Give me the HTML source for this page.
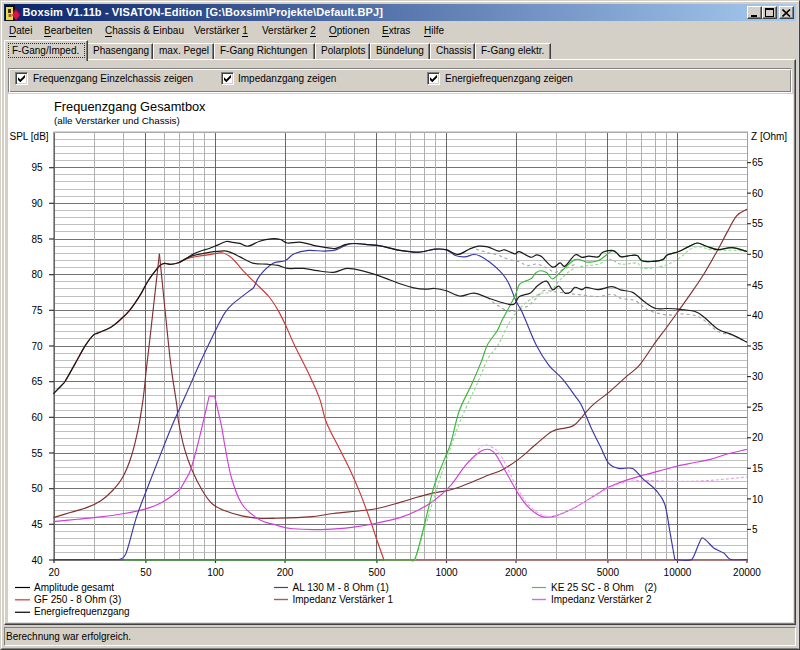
<!DOCTYPE html>
<html><head><meta charset="utf-8">
<style>
*{box-sizing:border-box}
html,body{margin:0;padding:0}
body{width:800px;height:650px;overflow:hidden;background:#d4d0c8;position:relative;font-family:"Liberation Sans",sans-serif;font-size:10px;color:#000}
.a{position:absolute}
#frame{left:0;top:0;width:800px;height:650px;border-top:1px solid #d4d0c8;border-left:1px solid #d4d0c8;border-right:1px solid #404040;border-bottom:1px solid #404040}
#frame2{left:1px;top:1px;width:798px;height:648px;border-top:1px solid #fff;border-left:1px solid #fff;border-right:1px solid #d8d8d8;border-bottom:1px solid #808080}
#title{left:4px;top:4px;width:792px;height:17px;background:linear-gradient(to right,#0a246a 0%,#a6caf0 100%)}
#ttxt{left:18.5px;top:1px;color:#fff;font-weight:bold;font-size:11px;letter-spacing:0.12px;line-height:15px;white-space:nowrap}
.tbtn{top:2px;width:15px;height:13px;background:#d4d0c8;border-top:1px solid #fff;border-left:1px solid #fff;border-right:1px solid #404040;border-bottom:1px solid #404040;box-shadow:inset -1px -1px 0 #808080}
.menu{top:25px;white-space:nowrap;line-height:12px}
.menu u{text-decoration:none;border-bottom:1px solid #000}
.tab{top:43px;height:16px;border-top:1px solid #fff;border-left:1px solid #fff;border-right:1px solid #404040;box-shadow:inset -1px 0 0 #808080;white-space:nowrap;line-height:14px;padding-left:5px}
#page{left:4px;top:59px;width:792px;height:566px;border-top:1px solid #fff;border-left:1px solid #fff;border-right:1px solid #404040;border-bottom:1px solid #404040;box-shadow:inset -1px -1px 0 #808080}
#grp{left:8px;top:68px;width:784px;height:25px;border-top:1px solid #808080;border-left:1px solid #808080;border-right:1px solid #fff;border-bottom:1px solid #fff;box-shadow:inset 1px 1px 0 #fff, inset -1px -1px 0 #808080}
.cb{top:72px;width:13px;height:13px;background:#fff;border-top:1px solid #808080;border-left:1px solid #808080;border-right:1px solid #fff;border-bottom:1px solid #fff;box-shadow:inset 1px 1px 0 #404040, inset -1px -1px 0 #d4d0c8}
.cbt{top:73px;white-space:nowrap;line-height:12px}
#white{left:8px;top:94px;width:786px;height:529px;background:#fff;box-shadow:inset -1px -1px 0 #e0e0e0}
#status{left:4px;top:627px;width:792px;height:19px;border-top:1px solid #808080;border-left:1px solid #808080;border-right:1px solid #fff;border-bottom:1px solid #fff}
svg text{font-family:"Liberation Sans",sans-serif;font-size:10px;fill:#000}
.leg{white-space:nowrap;line-height:12px}
</style></head><body>
<div id="frame" class="a"></div>
<div id="frame2" class="a"></div>
<div id="title" class="a">
  <svg class="a" style="left:1px;top:1px" width="17" height="16" viewBox="0 0 17 16">
    <rect x="0" y="0" width="10" height="16" fill="#101008"/>
    <path d="M6 8.5 L11 2.5 L17 8.5 L11 15.5 Z" fill="#5a1050" opacity="0.8"/>
    <rect x="1" y="2" width="7" height="13" fill="#e8e040"/>
    <rect x="3" y="4" width="3" height="4" fill="#403010"/>
    <rect x="3.5" y="9" width="3" height="3" fill="#a06030"/>
    <path d="M7 10 L11 5 L15 10 L11 15 Z" fill="#e0104a"/>
  </svg>
  <div id="ttxt" class="a">Boxsim V1.11b - VISATON-Edition [G:\Boxsim\Projekte\Default.BPJ]</div>
  <div class="a tbtn" style="left:743px"><div class="a" style="left:3px;top:8px;width:6px;height:2px;background:#000"></div></div>
  <div class="a tbtn" style="left:758px"><div class="a" style="left:2px;top:1px;width:9px;height:9px;border:1px solid #000;border-top-width:2px"></div></div>
  <div class="a tbtn" style="left:775px"><svg class="a" style="left:2px;top:2px" width="9" height="8" viewBox="0 0 9 8"><path d="M0.5 0.5 L8 7.5 M8 0.5 L0.5 7.5" stroke="#000" stroke-width="1.6"/></svg></div>
</div>
<div class="a menu" style="left:9px"><u>D</u>atei</div>
<div class="a menu" style="left:44px"><u>B</u>earbeiten</div>
<div class="a menu" style="left:105px"><u>C</u>hassis &amp; Einbau</div>
<div class="a menu" style="left:194px">Verstärker <u>1</u></div>
<div class="a menu" style="left:262px">Verstärker <u>2</u></div>
<div class="a menu" style="left:329px"><u>O</u>ptionen</div>
<div class="a menu" style="left:382px"><u>E</u>xtras</div>
<div class="a menu" style="left:424px"><u>H</u>ilfe</div>

<div id="page" class="a"></div>
<div class="a tab" style="left:87px;width:66px">Phasengang</div>
<div class="a tab" style="left:153px;width:61px">max. Pegel</div>
<div class="a tab" style="left:214px;width:101px">F-Gang Richtungen</div>
<div class="a tab" style="left:315px;width:55px">Polarplots</div>
<div class="a tab" style="left:370px;width:60px">Bündelung</div>
<div class="a tab" style="left:430px;width:45px">Chassis</div>
<div class="a tab" style="left:475px;width:76px">F-Gang elektr.</div>
<div class="a" style="left:4px;top:40px;width:84px;height:21px;background:#d4d0c8;border-top:1px solid #fff;border-left:1px solid #fff;border-right:1px solid #404040;box-shadow:inset -1px 0 0 #808080"></div>
<div class="a" style="left:8px;top:43px;width:77px;height:15px;border:1px dotted #303030"></div>
<div class="a" style="left:12px;top:45px;white-space:nowrap;line-height:12px">F-Gang/Imped.</div>

<div id="grp" class="a"></div>
<div class="a cb" style="left:15px"><svg class="a" style="left:1px;top:1px" width="9" height="9" viewBox="0 0 9 9"><path d="M1 3.2 L3.3 5.5 L8 0.8 L8 3.6 L3.3 8.3 L1 6 Z" fill="#000"/></svg></div>
<div class="a cbt" style="left:33px">Frequenzgang Einzelchassis zeigen</div>
<div class="a cb" style="left:221px"><svg class="a" style="left:1px;top:1px" width="9" height="9" viewBox="0 0 9 9"><path d="M1 3.2 L3.3 5.5 L8 0.8 L8 3.6 L3.3 8.3 L1 6 Z" fill="#000"/></svg></div>
<div class="a cbt" style="left:238px">Impedanzgang zeigen</div>
<div class="a cb" style="left:427px"><svg class="a" style="left:1px;top:1px" width="9" height="9" viewBox="0 0 9 9"><path d="M1 3.2 L3.3 5.5 L8 0.8 L8 3.6 L3.3 8.3 L1 6 Z" fill="#000"/></svg></div>
<div class="a cbt" style="left:445px">Energiefrequenzgang zeigen</div>

<div id="white" class="a"></div>
<svg class="a" style="left:0;top:0" width="800" height="650" viewBox="0 0 800 650">
<text x="54" y="111" style="font-size:12.8px">Frequenzgang Gesamtbox</text>
<text x="54" y="123.8" style="font-size:9.8px">(alle Verstärker und Chassis)</text>
<text x="9.5" y="140">SPL [dB]</text>
<text x="751" y="140">Z [Ohm]</text>
<line x1="54" y1="560.5" x2="747" y2="560.5" stroke="#747474" stroke-width="1"/>
<line x1="54" y1="552.5" x2="747" y2="552.5" stroke="#c0c0c0" stroke-width="1"/>
<line x1="54" y1="545.5" x2="747" y2="545.5" stroke="#c0c0c0" stroke-width="1"/>
<line x1="54" y1="538.5" x2="747" y2="538.5" stroke="#c0c0c0" stroke-width="1"/>
<line x1="54" y1="531.5" x2="747" y2="531.5" stroke="#c0c0c0" stroke-width="1"/>
<line x1="54" y1="524.5" x2="747" y2="524.5" stroke="#747474" stroke-width="1"/>
<line x1="54" y1="517.5" x2="747" y2="517.5" stroke="#c0c0c0" stroke-width="1"/>
<line x1="54" y1="510.5" x2="747" y2="510.5" stroke="#c0c0c0" stroke-width="1"/>
<line x1="54" y1="502.5" x2="747" y2="502.5" stroke="#c0c0c0" stroke-width="1"/>
<line x1="54" y1="495.5" x2="747" y2="495.5" stroke="#c0c0c0" stroke-width="1"/>
<line x1="54" y1="488.5" x2="747" y2="488.5" stroke="#747474" stroke-width="1"/>
<line x1="54" y1="481.5" x2="747" y2="481.5" stroke="#c0c0c0" stroke-width="1"/>
<line x1="54" y1="474.5" x2="747" y2="474.5" stroke="#c0c0c0" stroke-width="1"/>
<line x1="54" y1="467.5" x2="747" y2="467.5" stroke="#c0c0c0" stroke-width="1"/>
<line x1="54" y1="460.5" x2="747" y2="460.5" stroke="#c0c0c0" stroke-width="1"/>
<line x1="54" y1="453.5" x2="747" y2="453.5" stroke="#747474" stroke-width="1"/>
<line x1="54" y1="445.5" x2="747" y2="445.5" stroke="#c0c0c0" stroke-width="1"/>
<line x1="54" y1="438.5" x2="747" y2="438.5" stroke="#c0c0c0" stroke-width="1"/>
<line x1="54" y1="431.5" x2="747" y2="431.5" stroke="#c0c0c0" stroke-width="1"/>
<line x1="54" y1="424.5" x2="747" y2="424.5" stroke="#c0c0c0" stroke-width="1"/>
<line x1="54" y1="417.5" x2="747" y2="417.5" stroke="#747474" stroke-width="1"/>
<line x1="54" y1="410.5" x2="747" y2="410.5" stroke="#c0c0c0" stroke-width="1"/>
<line x1="54" y1="403.5" x2="747" y2="403.5" stroke="#c0c0c0" stroke-width="1"/>
<line x1="54" y1="395.5" x2="747" y2="395.5" stroke="#c0c0c0" stroke-width="1"/>
<line x1="54" y1="388.5" x2="747" y2="388.5" stroke="#c0c0c0" stroke-width="1"/>
<line x1="54" y1="381.5" x2="747" y2="381.5" stroke="#747474" stroke-width="1"/>
<line x1="54" y1="374.5" x2="747" y2="374.5" stroke="#c0c0c0" stroke-width="1"/>
<line x1="54" y1="367.5" x2="747" y2="367.5" stroke="#c0c0c0" stroke-width="1"/>
<line x1="54" y1="360.5" x2="747" y2="360.5" stroke="#c0c0c0" stroke-width="1"/>
<line x1="54" y1="353.5" x2="747" y2="353.5" stroke="#c0c0c0" stroke-width="1"/>
<line x1="54" y1="346.5" x2="747" y2="346.5" stroke="#747474" stroke-width="1"/>
<line x1="54" y1="338.5" x2="747" y2="338.5" stroke="#c0c0c0" stroke-width="1"/>
<line x1="54" y1="331.5" x2="747" y2="331.5" stroke="#c0c0c0" stroke-width="1"/>
<line x1="54" y1="324.5" x2="747" y2="324.5" stroke="#c0c0c0" stroke-width="1"/>
<line x1="54" y1="317.5" x2="747" y2="317.5" stroke="#c0c0c0" stroke-width="1"/>
<line x1="54" y1="310.5" x2="747" y2="310.5" stroke="#747474" stroke-width="1"/>
<line x1="54" y1="303.5" x2="747" y2="303.5" stroke="#c0c0c0" stroke-width="1"/>
<line x1="54" y1="296.5" x2="747" y2="296.5" stroke="#c0c0c0" stroke-width="1"/>
<line x1="54" y1="288.5" x2="747" y2="288.5" stroke="#c0c0c0" stroke-width="1"/>
<line x1="54" y1="281.5" x2="747" y2="281.5" stroke="#c0c0c0" stroke-width="1"/>
<line x1="54" y1="274.5" x2="747" y2="274.5" stroke="#747474" stroke-width="1"/>
<line x1="54" y1="267.5" x2="747" y2="267.5" stroke="#c0c0c0" stroke-width="1"/>
<line x1="54" y1="260.5" x2="747" y2="260.5" stroke="#c0c0c0" stroke-width="1"/>
<line x1="54" y1="253.5" x2="747" y2="253.5" stroke="#c0c0c0" stroke-width="1"/>
<line x1="54" y1="246.5" x2="747" y2="246.5" stroke="#c0c0c0" stroke-width="1"/>
<line x1="54" y1="239.5" x2="747" y2="239.5" stroke="#747474" stroke-width="1"/>
<line x1="54" y1="231.5" x2="747" y2="231.5" stroke="#c0c0c0" stroke-width="1"/>
<line x1="54" y1="224.5" x2="747" y2="224.5" stroke="#c0c0c0" stroke-width="1"/>
<line x1="54" y1="217.5" x2="747" y2="217.5" stroke="#c0c0c0" stroke-width="1"/>
<line x1="54" y1="210.5" x2="747" y2="210.5" stroke="#c0c0c0" stroke-width="1"/>
<line x1="54" y1="203.5" x2="747" y2="203.5" stroke="#747474" stroke-width="1"/>
<line x1="54" y1="196.5" x2="747" y2="196.5" stroke="#c0c0c0" stroke-width="1"/>
<line x1="54" y1="189.5" x2="747" y2="189.5" stroke="#c0c0c0" stroke-width="1"/>
<line x1="54" y1="181.5" x2="747" y2="181.5" stroke="#c0c0c0" stroke-width="1"/>
<line x1="54" y1="174.5" x2="747" y2="174.5" stroke="#c0c0c0" stroke-width="1"/>
<line x1="54" y1="167.5" x2="747" y2="167.5" stroke="#747474" stroke-width="1"/>
<line x1="54" y1="160.5" x2="747" y2="160.5" stroke="#c0c0c0" stroke-width="1"/>
<line x1="54" y1="153.5" x2="747" y2="153.5" stroke="#c0c0c0" stroke-width="1"/>
<line x1="54" y1="146.5" x2="747" y2="146.5" stroke="#c0c0c0" stroke-width="1"/>
<line x1="54" y1="139.5" x2="747" y2="139.5" stroke="#c0c0c0" stroke-width="1"/>
<line x1="54.5" y1="132" x2="54.5" y2="560" stroke="#686868" stroke-width="1"/>
<line x1="94.5" y1="132" x2="94.5" y2="560" stroke="#b0b0b0" stroke-width="1"/>
<line x1="123.5" y1="132" x2="123.5" y2="560" stroke="#b0b0b0" stroke-width="1"/>
<line x1="145.5" y1="132" x2="145.5" y2="560" stroke="#686868" stroke-width="1"/>
<line x1="164.5" y1="132" x2="164.5" y2="560" stroke="#b0b0b0" stroke-width="1"/>
<line x1="179.5" y1="132" x2="179.5" y2="560" stroke="#b0b0b0" stroke-width="1"/>
<line x1="193.5" y1="132" x2="193.5" y2="560" stroke="#b0b0b0" stroke-width="1"/>
<line x1="204.5" y1="132" x2="204.5" y2="560" stroke="#b0b0b0" stroke-width="1"/>
<line x1="215.5" y1="132" x2="215.5" y2="560" stroke="#686868" stroke-width="1"/>
<line x1="285.5" y1="132" x2="285.5" y2="560" stroke="#686868" stroke-width="1"/>
<line x1="325.5" y1="132" x2="325.5" y2="560" stroke="#b0b0b0" stroke-width="1"/>
<line x1="354.5" y1="132" x2="354.5" y2="560" stroke="#b0b0b0" stroke-width="1"/>
<line x1="376.5" y1="132" x2="376.5" y2="560" stroke="#686868" stroke-width="1"/>
<line x1="395.5" y1="132" x2="395.5" y2="560" stroke="#b0b0b0" stroke-width="1"/>
<line x1="410.5" y1="132" x2="410.5" y2="560" stroke="#b0b0b0" stroke-width="1"/>
<line x1="424.5" y1="132" x2="424.5" y2="560" stroke="#b0b0b0" stroke-width="1"/>
<line x1="435.5" y1="132" x2="435.5" y2="560" stroke="#b0b0b0" stroke-width="1"/>
<line x1="446.5" y1="132" x2="446.5" y2="560" stroke="#686868" stroke-width="1"/>
<line x1="516.5" y1="132" x2="516.5" y2="560" stroke="#686868" stroke-width="1"/>
<line x1="556.5" y1="132" x2="556.5" y2="560" stroke="#b0b0b0" stroke-width="1"/>
<line x1="585.5" y1="132" x2="585.5" y2="560" stroke="#b0b0b0" stroke-width="1"/>
<line x1="607.5" y1="132" x2="607.5" y2="560" stroke="#686868" stroke-width="1"/>
<line x1="626.5" y1="132" x2="626.5" y2="560" stroke="#b0b0b0" stroke-width="1"/>
<line x1="641.5" y1="132" x2="641.5" y2="560" stroke="#b0b0b0" stroke-width="1"/>
<line x1="655.5" y1="132" x2="655.5" y2="560" stroke="#b0b0b0" stroke-width="1"/>
<line x1="666.5" y1="132" x2="666.5" y2="560" stroke="#b0b0b0" stroke-width="1"/>
<line x1="677.5" y1="132" x2="677.5" y2="560" stroke="#686868" stroke-width="1"/>
<line x1="747.5" y1="132" x2="747.5" y2="560" stroke="#686868" stroke-width="1"/>
<line x1="53.5" y1="132" x2="53.5" y2="561" stroke="#a0a0a0" stroke-width="1"/>
<line x1="747.5" y1="132" x2="747.5" y2="561" stroke="#a0a0a0" stroke-width="1"/>
<line x1="53.5" y1="132.25" x2="748" y2="132.25" stroke="#aaaaaa" stroke-width="1.5"/>
<line x1="53.5" y1="559.5" x2="748" y2="559.5" stroke="#606060" stroke-width="1"/>
<line x1="49" y1="560.00" x2="54" y2="560.00" stroke="#333" stroke-width="1.2"/>
<line x1="49" y1="524.33" x2="54" y2="524.33" stroke="#333" stroke-width="1.2"/>
<line x1="49" y1="488.67" x2="54" y2="488.67" stroke="#333" stroke-width="1.2"/>
<line x1="49" y1="453.00" x2="54" y2="453.00" stroke="#333" stroke-width="1.2"/>
<line x1="49" y1="417.33" x2="54" y2="417.33" stroke="#333" stroke-width="1.2"/>
<line x1="49" y1="381.67" x2="54" y2="381.67" stroke="#333" stroke-width="1.2"/>
<line x1="49" y1="346.00" x2="54" y2="346.00" stroke="#333" stroke-width="1.2"/>
<line x1="49" y1="310.33" x2="54" y2="310.33" stroke="#333" stroke-width="1.2"/>
<line x1="49" y1="274.67" x2="54" y2="274.67" stroke="#333" stroke-width="1.2"/>
<line x1="49" y1="239.00" x2="54" y2="239.00" stroke="#333" stroke-width="1.2"/>
<line x1="49" y1="203.33" x2="54" y2="203.33" stroke="#333" stroke-width="1.2"/>
<line x1="49" y1="167.67" x2="54" y2="167.67" stroke="#333" stroke-width="1.2"/>
<line x1="747" y1="529.43" x2="751" y2="529.43" stroke="#333" stroke-width="1.2"/>
<line x1="747" y1="498.86" x2="751" y2="498.86" stroke="#333" stroke-width="1.2"/>
<line x1="747" y1="468.29" x2="751" y2="468.29" stroke="#333" stroke-width="1.2"/>
<line x1="747" y1="437.71" x2="751" y2="437.71" stroke="#333" stroke-width="1.2"/>
<line x1="747" y1="407.14" x2="751" y2="407.14" stroke="#333" stroke-width="1.2"/>
<line x1="747" y1="376.57" x2="751" y2="376.57" stroke="#333" stroke-width="1.2"/>
<line x1="747" y1="346.00" x2="751" y2="346.00" stroke="#333" stroke-width="1.2"/>
<line x1="747" y1="315.43" x2="751" y2="315.43" stroke="#333" stroke-width="1.2"/>
<line x1="747" y1="284.86" x2="751" y2="284.86" stroke="#333" stroke-width="1.2"/>
<line x1="747" y1="254.29" x2="751" y2="254.29" stroke="#333" stroke-width="1.2"/>
<line x1="747" y1="223.71" x2="751" y2="223.71" stroke="#333" stroke-width="1.2"/>
<line x1="747" y1="193.14" x2="751" y2="193.14" stroke="#333" stroke-width="1.2"/>
<line x1="747" y1="162.57" x2="751" y2="162.57" stroke="#333" stroke-width="1.2"/>
<line x1="54.00" y1="560" x2="54.00" y2="563" stroke="#333" stroke-width="1.2"/>
<line x1="145.92" y1="560" x2="145.92" y2="563" stroke="#333" stroke-width="1.2"/>
<line x1="215.46" y1="560" x2="215.46" y2="563" stroke="#333" stroke-width="1.2"/>
<line x1="285.00" y1="560" x2="285.00" y2="563" stroke="#333" stroke-width="1.2"/>
<line x1="376.92" y1="560" x2="376.92" y2="563" stroke="#333" stroke-width="1.2"/>
<line x1="446.46" y1="560" x2="446.46" y2="563" stroke="#333" stroke-width="1.2"/>
<line x1="516.00" y1="560" x2="516.00" y2="563" stroke="#333" stroke-width="1.2"/>
<line x1="607.92" y1="560" x2="607.92" y2="563" stroke="#333" stroke-width="1.2"/>
<line x1="677.46" y1="560" x2="677.46" y2="563" stroke="#333" stroke-width="1.2"/>
<line x1="747.00" y1="560" x2="747.00" y2="563" stroke="#333" stroke-width="1.2"/>
<path d="M53.40,517.60 C56.22,516.75 64.67,514.20 70.30,512.50 C75.93,510.80 82.12,509.37 87.20,507.40 C92.28,505.43 96.57,503.52 100.80,500.70 C105.03,497.88 108.93,494.45 112.60,490.50 C116.27,486.55 119.70,482.63 122.80,477.00 C125.90,471.37 128.67,464.60 131.20,456.70 C133.73,448.80 136.02,439.20 138.00,429.60 C139.98,420.00 141.70,409.25 143.10,399.10 C144.50,388.95 145.38,377.72 146.40,368.70 C147.42,359.68 148.73,348.95 149.20,345.00" fill="none" stroke="#803030" stroke-width="1.15" stroke-linejoin="round" />
<path d="M149.20,345.00 L159.40,253.80" fill="none" stroke="#803030" stroke-width="1.15" stroke-linejoin="round" />
<path d="M159.40,253.80 C160.93,269.00 166.53,325.28 168.60,345.00 C170.67,364.72 170.42,361.95 171.80,372.10 C173.18,382.25 175.78,397.67 176.90,405.90 C178.02,414.13 177.22,414.28 178.50,421.50 C179.78,428.72 182.33,441.08 184.60,449.20 C186.87,457.32 189.15,463.32 192.10,470.20 C195.05,477.08 198.92,484.87 202.30,490.50 C205.68,496.13 208.62,500.62 212.40,504.00 C216.18,507.38 220.08,508.82 225.00,510.80 C229.92,512.78 236.27,514.65 241.90,515.90 C247.53,517.15 253.15,517.90 258.80,518.30 C264.45,518.70 267.33,518.53 275.80,518.30 C284.27,518.07 300.02,517.70 309.60,516.90 C319.18,516.10 324.83,514.52 333.30,513.50 C341.77,512.48 353.07,511.63 360.40,510.80 C367.73,509.97 370.70,509.90 377.30,508.50 C383.90,507.10 393.40,504.27 400.00,502.40 C406.60,500.53 411.27,498.88 416.90,497.30 C422.53,495.72 428.15,494.15 433.80,492.90 C439.45,491.65 445.15,491.33 450.80,489.80 C456.45,488.27 461.50,486.12 467.70,483.70 C473.90,481.28 482.37,477.55 488.00,475.30 C493.63,473.05 496.43,472.85 501.50,470.20 C506.57,467.55 512.75,463.63 518.40,459.40 C524.05,455.17 529.75,449.48 535.40,444.80 C541.05,440.12 547.23,434.12 552.30,431.30 C557.37,428.48 562.02,429.03 565.80,427.90 C569.58,426.77 570.65,428.17 575.00,424.50 C579.35,420.83 586.27,411.25 591.90,405.90 C597.53,400.55 603.15,397.20 608.80,392.40 C614.45,387.60 620.72,381.62 625.80,377.10 C630.88,372.58 634.68,370.65 639.30,365.30 C643.92,359.95 648.83,351.47 653.50,345.00 C658.17,338.53 663.08,332.27 667.30,326.50 C671.52,320.73 674.95,315.78 678.80,310.40 C682.65,305.02 686.17,300.35 690.40,294.20 C694.63,288.05 699.58,281.00 704.20,273.50 C708.82,266.00 714.25,256.13 718.10,249.20 C721.95,242.27 724.22,237.47 727.30,231.90 C730.38,226.33 733.32,219.57 736.60,215.80 C739.88,212.03 745.27,210.38 747.00,209.30" fill="none" stroke="#803030" stroke-width="1.15" stroke-linejoin="round" />
<path d="M53.40,393.80 C54.88,392.27 60.30,386.77 62.30,384.60 C64.30,382.43 63.35,384.13 65.40,380.80 C67.45,377.47 71.27,370.50 74.60,364.60 C77.93,358.70 82.32,350.27 85.40,345.40 C88.48,340.53 91.05,337.45 93.10,335.40 C95.15,333.35 95.13,334.25 97.70,333.10 C100.27,331.95 105.68,329.92 108.50,328.50 C111.32,327.08 112.68,326.02 114.60,324.60 C116.52,323.18 117.50,322.37 120.00,320.00 C122.50,317.63 126.27,314.50 129.60,310.40 C132.93,306.30 136.98,300.22 140.00,295.40 C143.02,290.58 145.13,285.60 147.70,281.50 C150.27,277.40 153.35,273.48 155.40,270.80 C157.45,268.12 158.47,266.63 160.00,265.40 C161.53,264.17 162.80,263.58 164.60,263.40 C166.40,263.22 168.48,264.40 170.80,264.30 C173.12,264.20 175.93,263.68 178.50,262.80 C181.07,261.92 183.65,259.97 186.20,259.00 C188.75,258.03 189.97,257.73 193.80,257.00 C197.63,256.27 204.33,255.27 209.20,254.60 C214.07,253.93 219.15,252.35 223.00,253.00 C226.85,253.65 228.88,255.47 232.30,258.50 C235.72,261.53 239.72,267.17 243.50,271.20 C247.28,275.23 250.78,278.48 255.00,282.70 C259.22,286.92 264.95,291.88 268.80,296.50 C272.65,301.12 275.20,305.40 278.10,310.40 C281.00,315.40 283.48,320.73 286.20,326.50 C288.92,332.27 290.50,336.83 294.40,345.00 C298.30,353.17 305.37,366.48 309.60,375.50 C313.83,384.52 316.98,391.22 319.80,399.10 C322.62,406.98 323.12,414.33 326.50,422.80 C329.88,431.27 336.15,442.00 340.10,449.90 C344.05,457.80 346.82,462.87 350.20,470.20 C353.58,477.53 357.02,485.43 360.40,493.90 C363.78,502.37 367.68,513.10 370.50,521.00 C373.32,528.90 375.05,534.80 377.30,541.30 C379.55,547.80 382.88,556.88 384.00,560.00" fill="none" stroke="#d03434" stroke-width="1.15" stroke-linejoin="round" />
<path d="M384.00,560.00 L747.00,560.00" fill="none" stroke="#e08080" stroke-width="1.2" stroke-linejoin="round" />
<path d="M53.40,521.60 C57.35,521.22 69.20,520.08 77.10,519.30 C85.00,518.52 92.92,517.87 100.80,516.90 C108.68,515.93 117.07,514.80 124.40,513.50 C131.73,512.20 138.58,510.95 144.80,509.10 C151.02,507.25 156.07,505.50 161.70,502.40 C167.33,499.30 174.65,494.23 178.60,490.50 C182.55,486.77 183.37,483.55 185.40,480.00 C187.43,476.45 188.62,475.62 190.80,469.20 C192.98,462.78 195.43,453.67 198.50,441.50 C201.57,429.33 207.42,403.75 209.20,396.20" fill="none" stroke="#d040d8" stroke-width="1.15" stroke-linejoin="round" />
<path d="M209.20,396.20 L214.60,396.20" fill="none" stroke="#d040d8" stroke-width="1.15" stroke-linejoin="round" />
<path d="M214.60,396.20 C215.75,401.20 219.77,417.82 221.50,426.20 C223.23,434.58 223.33,437.87 225.00,446.50 C226.67,455.13 228.68,468.42 231.50,478.00 C234.32,487.58 237.35,497.12 241.90,504.00 C246.45,510.88 253.15,515.80 258.80,519.30 C264.45,522.80 270.15,523.42 275.80,525.00 C281.45,526.58 284.25,528.07 292.70,528.80 C301.15,529.53 316.35,529.68 326.50,529.40 C336.65,529.12 345.70,528.05 353.60,527.10 C361.50,526.15 366.17,525.28 373.90,523.70 C381.63,522.12 392.83,519.75 400.00,517.60 C407.17,515.45 411.27,513.62 416.90,510.80 C422.53,507.98 428.15,504.93 433.80,500.70 C439.45,496.47 445.72,491.05 450.80,485.40 C455.88,479.75 459.80,472.15 464.30,466.80 C468.80,461.45 473.97,456.23 477.80,453.30 C481.63,450.37 484.47,449.20 487.30,449.20 C490.13,449.20 491.87,449.80 494.80,453.30 C497.73,456.80 500.97,463.43 504.90,470.20 C508.83,476.97 514.45,487.70 518.40,493.90 C522.35,500.10 524.65,503.62 528.60,507.40 C532.55,511.18 537.58,515.18 542.10,516.60 C546.62,518.02 550.22,517.43 555.70,515.90 C561.18,514.37 568.97,510.50 575.00,507.40 C581.03,504.30 586.27,500.68 591.90,497.30 C597.53,493.92 603.15,489.92 608.80,487.10 C614.45,484.28 620.15,482.37 625.80,480.40 C631.45,478.43 637.07,476.88 642.70,475.30 C648.33,473.72 653.97,472.42 659.60,470.90 C665.23,469.38 670.87,467.55 676.50,466.20 C682.13,464.85 687.75,463.93 693.40,462.80 C699.05,461.67 704.75,460.87 710.40,459.40 C716.05,457.93 721.67,455.58 727.30,454.00 C732.93,452.42 740.92,450.65 744.20,449.90 C747.48,449.15 746.53,449.57 747.00,449.50" fill="none" stroke="#d040d8" stroke-width="1.15" stroke-linejoin="round" />
<path d="M477.80,450.00 C478.93,449.13 481.77,444.97 484.60,444.80 C487.43,444.63 491.98,447.02 494.80,449.00 C497.62,450.98 497.57,449.87 501.50,456.70 C505.43,463.53 513.88,481.95 518.40,490.00 C522.92,498.05 524.65,500.83 528.60,505.00 C532.55,509.17 537.58,513.18 542.10,515.00 C546.62,516.82 550.22,517.17 555.70,515.90 C561.18,514.63 568.97,510.50 575.00,507.40 C581.03,504.30 586.27,500.53 591.90,497.30 C597.53,494.07 603.15,490.55 608.80,488.00 C614.45,485.45 620.15,483.27 625.80,482.00 C631.45,480.73 634.25,480.50 642.70,480.40 C651.15,480.30 665.22,481.40 676.50,481.40 C687.78,481.40 698.65,481.13 710.40,480.40 C722.15,479.67 740.90,477.57 747.00,477.00" fill="none" stroke="#e8a0e8" stroke-width="1.1" stroke-linejoin="round" stroke-dasharray="3,2"/>
<path d="M415.20,560.00 C417.17,553.50 423.33,533.15 427.00,521.00 C430.67,508.85 433.80,497.82 437.20,487.10 C440.60,476.38 443.45,467.97 447.40,456.70 C451.35,445.43 455.83,431.92 460.90,419.50 C465.97,407.08 473.28,392.37 477.80,382.20 C482.32,372.03 484.62,364.70 488.00,358.50 C491.38,352.30 494.68,350.72 498.10,345.00 C501.52,339.28 504.85,330.37 508.50,324.20 C512.15,318.03 515.00,313.00 520.00,308.00 C525.00,303.00 533.50,296.87 538.50,294.20 C543.50,291.53 546.42,294.37 550.00,292.00 C553.58,289.63 555.83,284.00 560.00,280.00 C564.17,276.00 568.67,270.63 575.00,268.00 C581.33,265.37 592.23,265.67 598.00,264.20 C603.77,262.73 605.73,259.20 609.60,259.20 C613.47,259.20 616.58,263.57 621.20,264.20 C625.82,264.83 633.85,262.30 637.30,263.00 C640.75,263.70 637.67,267.88 641.90,268.40 C646.13,268.92 656.55,267.75 662.70,266.10 C668.85,264.45 673.42,261.68 678.80,258.50 C684.18,255.32 689.22,248.42 695.00,247.00 C700.78,245.58 706.57,249.43 713.50,250.00 C720.43,250.57 731.02,250.07 736.60,250.40 C742.18,250.73 745.27,251.73 747.00,252.00" fill="none" stroke="#90d890" stroke-width="1.1" stroke-linejoin="round" stroke-dasharray="3,2"/>
<path d="M476.00,249.00 C477.95,249.62 483.95,251.63 487.70,252.70 C491.45,253.77 494.87,254.23 498.50,255.40 C502.13,256.57 505.82,258.57 509.50,259.70 C513.18,260.83 517.72,261.18 520.60,262.20 C523.48,263.22 524.13,265.50 526.80,265.80 C529.47,266.10 533.32,263.68 536.60,264.00 C539.88,264.32 543.63,266.37 546.50,267.70 C549.37,269.03 551.55,271.48 553.80,272.00 C556.05,272.52 556.47,272.10 560.00,270.80 C563.53,269.50 572.50,265.30 575.00,264.20" fill="none" stroke="#a0a0a0" stroke-width="1.1" stroke-linejoin="round" stroke-dasharray="3,3"/>
<path d="M487.70,297.70 C489.28,298.95 493.35,302.92 497.20,305.20 C501.05,307.48 505.87,311.18 510.80,311.40 C515.73,311.62 522.70,308.55 526.80,306.50 C530.90,304.45 532.53,301.77 535.40,299.10 C538.27,296.43 540.93,291.73 544.00,290.50 C547.07,289.27 548.63,291.08 553.80,291.70 C558.97,292.32 567.63,293.40 575.00,294.20 C582.37,295.00 591.83,296.50 598.00,296.50 C604.17,296.50 608.17,293.88 612.00,294.20 C615.83,294.52 617.17,297.32 621.00,298.40 C624.83,299.48 630.37,298.70 635.00,300.70 C639.63,302.70 643.42,308.02 648.80,310.40 C654.18,312.78 661.90,314.42 667.30,315.00 C672.70,315.58 675.82,313.52 681.20,313.90 C686.58,314.28 693.45,314.35 699.60,317.30 C705.75,320.25 712.72,328.65 718.10,331.60 C723.48,334.55 727.08,333.23 731.90,335.00 C736.72,336.77 744.48,341.00 747.00,342.20" fill="none" stroke="#a0a0a0" stroke-width="1.1" stroke-linejoin="round" stroke-dasharray="3,3"/>
<path d="M53.40,559.50 L119.40,559.50" fill="none" stroke="#3838a8" stroke-width="1.15" stroke-linejoin="round" />
<path d="M119.40,559.50 C120.52,558.43 123.28,560.08 126.10,553.10 C128.92,546.12 132.92,528.03 136.30,517.60 C139.68,507.17 142.73,500.08 146.40,490.50 C150.07,480.92 154.07,470.82 158.30,460.10 C162.53,449.38 167.28,436.92 171.80,426.20 C176.32,415.48 180.88,405.95 185.40,395.80 C189.92,385.65 194.67,374.60 198.90,365.30 C203.13,356.00 207.28,347.30 210.80,340.00 C214.32,332.70 217.63,326.05 220.00,321.50 C222.37,316.95 223.02,315.52 225.00,312.70 C226.98,309.88 228.05,308.07 231.90,304.60 C235.75,301.13 244.45,294.78 248.10,291.90 C251.75,289.02 251.88,289.98 253.80,287.30 C255.72,284.62 256.32,279.83 259.60,275.80 C262.88,271.77 269.27,265.60 273.50,263.10 C277.73,260.60 281.55,262.35 285.00,260.80 C288.45,259.25 290.35,255.53 294.20,253.80 C298.05,252.07 303.10,250.85 308.10,250.40 C313.10,249.95 319.58,251.18 324.20,251.10 C328.82,251.02 331.95,250.98 335.80,249.90 C339.65,248.82 344.23,245.67 347.30,244.60 C350.37,243.53 350.73,243.50 354.20,243.50 C357.67,243.50 363.48,244.15 368.10,244.60 C372.72,245.05 376.58,245.23 381.90,246.20 C387.22,247.17 393.90,249.40 400.00,250.40 C406.10,251.40 412.73,252.40 418.50,252.20 C424.27,252.00 429.98,249.58 434.60,249.20 C439.22,248.82 442.73,248.85 446.20,249.90 C449.67,250.95 452.33,254.33 455.40,255.50 C458.47,256.67 461.53,257.07 464.60,256.90 C467.67,256.73 471.23,254.65 473.80,254.50 C476.37,254.35 477.33,254.72 480.00,256.00 C482.67,257.28 486.52,259.73 489.80,262.20 C493.08,264.67 497.03,268.13 499.70,270.80 C502.37,273.47 503.95,275.33 505.80,278.20 C507.65,281.07 509.15,284.32 510.80,288.00 C512.45,291.68 513.87,296.40 515.70,300.30 C517.53,304.20 520.17,308.12 521.80,311.40 C523.43,314.68 523.10,314.40 525.50,320.00 C527.90,325.60 532.30,337.45 536.20,345.00 C540.10,352.55 544.53,359.67 548.90,365.30 C553.27,370.93 558.05,373.72 562.40,378.80 C566.75,383.88 571.77,391.28 575.00,395.80 C578.23,400.32 578.98,400.27 581.80,405.90 C584.62,411.53 588.80,422.83 591.90,429.60 C595.00,436.37 597.58,440.87 600.40,446.50 C603.22,452.13 605.70,459.73 608.80,463.40 C611.90,467.07 615.05,467.65 619.00,468.50 C622.95,469.35 628.55,466.80 632.50,468.50 C636.45,470.20 638.75,475.03 642.70,478.70 C646.65,482.37 652.53,486.28 656.20,490.50 C659.87,494.72 662.43,497.23 664.70,504.00 C666.97,510.77 668.95,526.58 669.80,531.10" fill="none" stroke="#3838a8" stroke-width="1.15" stroke-linejoin="round" />
<path d="M669.80,531.10 L674.80,559.50" fill="none" stroke="#3838a8" stroke-width="1.15" stroke-linejoin="round" />
<path d="M674.80,559.50 C676.50,559.50 689.09,561.66 691.80,559.50 C694.51,557.34 699.71,539.05 701.90,537.90 C704.09,536.75 711.50,546.48 713.70,548.00 C715.90,549.52 722.20,551.95 723.90,553.10 C725.60,554.25 728.39,558.86 730.70,559.50 C733.01,560.14 745.37,559.50 747.00,559.50" fill="none" stroke="#3838a8" stroke-width="1.15" stroke-linejoin="round" />
<path d="M124.00,560.00 L410.20,560.00" fill="none" stroke="#38b838" stroke-width="1.15" stroke-linejoin="round" />
<path d="M410.20,560.00 C411.03,559.70 412.95,563.58 415.20,558.20 C417.45,552.82 420.60,539.55 423.70,527.70 C426.80,515.85 430.42,498.37 433.80,487.10 C437.18,475.83 441.17,467.43 444.00,460.10 C446.83,452.77 448.27,451.28 450.80,443.10 C453.33,434.92 455.82,420.58 459.20,411.00 C462.58,401.42 467.43,393.78 471.10,385.60 C474.77,377.42 478.50,368.67 481.20,361.90 C483.90,355.13 484.68,350.12 487.30,345.00 C489.92,339.88 494.42,335.37 496.90,331.20 C499.38,327.03 500.10,324.12 502.20,320.00 C504.30,315.88 507.25,310.80 509.50,306.50 C511.75,302.20 514.05,297.90 515.70,294.20 C517.35,290.50 517.55,286.57 519.40,284.30 C521.25,282.03 524.75,281.62 526.80,280.60 C528.85,279.58 530.27,279.43 531.70,278.20 C533.13,276.97 533.97,274.43 535.40,273.20 C536.83,271.97 538.45,270.90 540.30,270.80 C542.15,270.70 544.45,271.27 546.50,272.60 C548.55,273.93 550.35,278.80 552.60,278.80 C554.85,278.80 556.27,275.80 560.00,272.60 C563.73,269.40 570.58,261.37 575.00,259.60 C579.42,257.83 582.67,261.80 586.50,262.00 C590.33,262.20 593.77,262.63 598.00,260.80 C602.23,258.97 608.82,252.35 611.90,251.00 C614.98,249.65 614.95,251.72 616.50,252.70 C618.05,253.68 618.88,256.43 621.20,256.90 C623.52,257.37 627.72,255.73 630.40,255.50 C633.08,255.27 635.38,254.62 637.30,255.50 C639.22,256.38 639.58,259.80 641.90,260.80 C644.22,261.80 647.73,261.70 651.20,261.50 C654.67,261.30 660.02,260.68 662.70,259.60 C665.38,258.52 664.62,256.35 667.30,255.00 C669.98,253.65 675.33,252.85 678.80,251.50 C682.27,250.15 685.02,248.32 688.10,246.90 C691.18,245.48 694.23,243.12 697.30,243.00 C700.37,242.88 703.03,245.08 706.50,246.20 C709.97,247.32 713.87,249.47 718.10,249.70 C722.33,249.93 727.08,247.30 731.90,247.60 C736.72,247.90 744.48,250.85 747.00,251.50" fill="none" stroke="#38b838" stroke-width="1.15" stroke-linejoin="round" />
<path d="M178.50,262.80 C179.78,262.08 183.65,259.73 186.20,258.50 C188.75,257.27 189.97,256.43 193.80,255.40 C197.63,254.37 204.07,253.07 209.20,252.30 C214.33,251.53 220.75,250.67 224.60,250.80 C228.45,250.93 229.73,252.08 232.30,253.10 C234.87,254.12 236.60,255.23 240.00,256.90 C243.40,258.57 248.28,261.88 252.70,263.10 C257.12,264.32 262.27,263.82 266.50,264.20 C270.73,264.58 274.63,264.70 278.10,265.40 C281.57,266.10 283.07,267.90 287.30,268.40 C291.53,268.90 298.50,268.02 303.50,268.40 C308.50,268.78 312.30,270.05 317.30,270.70 C322.30,271.35 328.50,272.68 333.50,272.30 C338.50,271.92 342.30,268.58 347.30,268.40 C352.30,268.22 357.73,269.78 363.50,271.20 C369.27,272.62 375.82,274.80 381.90,276.90 C387.98,279.00 394.68,281.98 400.00,283.80 C405.32,285.62 409.57,286.90 413.80,287.80 C418.03,288.70 421.93,289.08 425.40,289.20 C428.87,289.32 431.13,288.23 434.60,288.50 C438.07,288.77 441.97,289.53 446.20,290.80 C450.43,292.07 455.40,295.72 460.00,296.10 C464.60,296.48 469.18,292.83 473.80,293.10 C478.42,293.37 483.58,296.30 487.70,297.70 C491.82,299.10 494.25,300.35 498.50,301.50 C502.75,302.65 509.72,305.42 513.20,304.60 C516.68,303.78 516.52,298.55 519.40,296.60 C522.28,294.65 527.43,294.75 530.50,292.90 C533.57,291.05 535.13,287.45 537.80,285.50 C540.47,283.55 544.03,280.48 546.50,281.20 C548.97,281.92 550.55,288.97 552.60,289.80 C554.65,290.63 556.73,285.65 558.80,286.20 C560.87,286.75 563.00,292.15 565.00,293.10 C567.00,294.05 569.13,292.87 570.80,291.90 C572.47,290.93 573.15,287.68 575.00,287.30 C576.85,286.92 579.98,289.60 581.90,289.60 C583.82,289.60 583.80,287.30 586.50,287.30 C589.20,287.30 593.87,289.72 598.10,289.60 C602.33,289.48 608.05,286.52 611.90,286.60 C615.75,286.68 617.73,289.13 621.20,290.10 C624.67,291.07 628.87,290.48 632.70,292.40 C636.53,294.32 640.35,298.92 644.20,301.60 C648.05,304.28 651.95,307.35 655.80,308.50 C659.65,309.65 663.47,308.38 667.30,308.50 C671.13,308.62 674.18,308.70 678.80,309.20 C683.42,309.70 690.77,310.15 695.00,311.50 C699.23,312.85 700.35,314.33 704.20,317.30 C708.05,320.27 713.48,326.42 718.10,329.30 C722.72,332.18 727.08,332.45 731.90,334.60 C736.72,336.75 744.48,340.93 747.00,342.20" fill="none" stroke="#202020" stroke-width="1.2" stroke-linejoin="round" />
<path d="M53.40,393.80 C54.88,392.27 60.30,386.77 62.30,384.60 C64.30,382.43 63.35,384.13 65.40,380.80 C67.45,377.47 71.27,370.50 74.60,364.60 C77.93,358.70 82.32,350.27 85.40,345.40 C88.48,340.53 91.05,337.45 93.10,335.40 C95.15,333.35 95.13,334.25 97.70,333.10 C100.27,331.95 105.68,329.92 108.50,328.50 C111.32,327.08 112.68,326.02 114.60,324.60 C116.52,323.18 117.50,322.37 120.00,320.00 C122.50,317.63 126.27,314.50 129.60,310.40 C132.93,306.30 136.98,300.22 140.00,295.40 C143.02,290.58 145.13,285.60 147.70,281.50 C150.27,277.40 153.35,273.48 155.40,270.80 C157.45,268.12 158.47,266.63 160.00,265.40 C161.53,264.17 162.80,263.58 164.60,263.40 C166.40,263.22 168.48,264.40 170.80,264.30 C173.12,264.20 175.93,263.77 178.50,262.80 C181.07,261.83 183.65,260.00 186.20,258.50 C188.75,257.00 191.25,255.08 193.80,253.80 C196.35,252.52 198.93,251.68 201.50,250.80 C204.07,249.92 206.63,249.40 209.20,248.50 C211.77,247.60 214.07,246.57 216.90,245.40 C219.73,244.23 223.63,242.02 226.20,241.50 C228.77,240.98 230.00,241.98 232.30,242.30 C234.60,242.62 237.37,242.75 240.00,243.40 C242.63,244.05 244.83,246.57 248.10,246.20 C251.37,245.83 255.75,242.43 259.60,241.20 C263.45,239.97 267.73,239.08 271.20,238.80 C274.67,238.52 277.72,238.80 280.40,239.50 C283.08,240.20 283.83,242.53 287.30,243.00 C290.77,243.47 296.20,241.77 301.20,242.30 C306.20,242.83 311.92,245.17 317.30,246.20 C322.68,247.23 330.03,248.27 333.50,248.50 C336.97,248.73 336.18,248.25 338.10,247.60 C340.02,246.95 342.32,245.28 345.00,244.60 C347.68,243.92 350.35,243.50 354.20,243.50 C358.05,243.50 363.48,244.15 368.10,244.60 C372.72,245.05 376.58,245.23 381.90,246.20 C387.22,247.17 393.90,249.40 400.00,250.40 C406.10,251.40 412.73,252.40 418.50,252.20 C424.27,252.00 429.98,249.62 434.60,249.20 C439.22,248.78 442.35,248.82 446.20,249.70 C450.05,250.58 453.87,254.58 457.70,254.50 C461.53,254.42 465.73,250.58 469.20,249.20 C472.67,247.82 475.42,246.58 478.50,246.20 C481.58,245.82 484.37,246.08 487.70,246.90 C491.03,247.72 495.68,250.62 498.50,251.10 C501.32,251.58 501.93,249.35 504.60,249.80 C507.27,250.25 512.03,253.48 514.50,253.80 C516.97,254.12 516.73,251.13 519.40,251.70 C522.07,252.27 527.63,256.68 530.50,257.20 C533.37,257.72 534.77,254.90 536.60,254.80 C538.43,254.70 538.83,254.55 541.50,256.60 C544.17,258.65 549.52,266.07 552.60,267.10 C555.68,268.13 557.93,262.97 560.00,262.80 C562.07,262.63 562.50,267.40 565.00,266.10 C567.50,264.80 572.18,256.47 575.00,255.00 C577.82,253.53 579.60,257.10 581.90,257.30 C584.20,257.50 586.10,256.27 588.80,256.20 C591.50,256.13 595.78,257.57 598.10,256.90 C600.42,256.23 600.40,253.28 602.70,252.20 C605.00,251.12 609.60,250.32 611.90,250.40 C614.20,250.48 614.95,251.62 616.50,252.70 C618.05,253.78 618.88,256.43 621.20,256.90 C623.52,257.37 627.72,255.73 630.40,255.50 C633.08,255.27 635.38,254.62 637.30,255.50 C639.22,256.38 639.58,259.80 641.90,260.80 C644.22,261.80 647.73,261.70 651.20,261.50 C654.67,261.30 660.02,260.68 662.70,259.60 C665.38,258.52 664.62,256.35 667.30,255.00 C669.98,253.65 675.33,252.85 678.80,251.50 C682.27,250.15 685.02,248.32 688.10,246.90 C691.18,245.48 694.23,243.12 697.30,243.00 C700.37,242.88 703.03,245.08 706.50,246.20 C709.97,247.32 713.87,249.47 718.10,249.70 C722.33,249.93 727.08,247.30 731.90,247.60 C736.72,247.90 744.48,250.85 747.00,251.50" fill="none" stroke="#181818" stroke-width="1.2" stroke-linejoin="round" />
<text x="42.5" y="563.6" text-anchor="end">40</text>
<text x="42.5" y="527.9" text-anchor="end">45</text>
<text x="42.5" y="492.3" text-anchor="end">50</text>
<text x="42.5" y="456.6" text-anchor="end">55</text>
<text x="42.5" y="420.9" text-anchor="end">60</text>
<text x="42.5" y="385.3" text-anchor="end">65</text>
<text x="42.5" y="349.6" text-anchor="end">70</text>
<text x="42.5" y="313.9" text-anchor="end">75</text>
<text x="42.5" y="278.3" text-anchor="end">80</text>
<text x="42.5" y="242.6" text-anchor="end">85</text>
<text x="42.5" y="206.9" text-anchor="end">90</text>
<text x="42.5" y="171.3" text-anchor="end">95</text>
<text x="752" y="533.0">5</text>
<text x="752" y="502.5">10</text>
<text x="752" y="471.9">15</text>
<text x="752" y="441.3">20</text>
<text x="752" y="410.7">25</text>
<text x="752" y="380.2">30</text>
<text x="752" y="349.6">35</text>
<text x="752" y="319.0">40</text>
<text x="752" y="288.5">45</text>
<text x="752" y="257.9">50</text>
<text x="752" y="227.3">55</text>
<text x="752" y="196.7">60</text>
<text x="752" y="166.2">65</text>
<text x="54.0" y="575.5" text-anchor="middle">20</text>
<text x="145.9" y="575.5" text-anchor="middle">50</text>
<text x="215.5" y="575.5" text-anchor="middle">100</text>
<text x="285.0" y="575.5" text-anchor="middle">200</text>
<text x="376.9" y="575.5" text-anchor="middle">500</text>
<text x="446.5" y="575.5" text-anchor="middle">1000</text>
<text x="516.0" y="575.5" text-anchor="middle">2000</text>
<text x="607.9" y="575.5" text-anchor="middle">5000</text>
<text x="677.5" y="575.5" text-anchor="middle">10000</text>
<text x="747.0" y="575.5" text-anchor="middle">20000</text>
<line x1="15" y1="587.5" x2="30" y2="587.5" stroke="#000" stroke-width="1.2"/>
<text x="34" y="591">Amplitude gesamt</text>
<line x1="15" y1="599.75" x2="30" y2="599.75" stroke="#d06868" stroke-width="1.6"/>
<text x="34" y="603">GF 250 - 8 Ohm (3)</text>
<line x1="15" y1="612.25" x2="30" y2="612.25" stroke="#000" stroke-width="1.2"/>
<text x="34" y="615">Energiefrequenzgang</text>
<line x1="274" y1="587.5" x2="288" y2="587.5" stroke="#404098" stroke-width="1.2"/>
<text x="292.5" y="591">AL 130 M - 8 Ohm (1)</text>
<line x1="274" y1="599.5" x2="288" y2="599.5" stroke="#a06060" stroke-width="1.4"/>
<text x="292.5" y="603">Impedanz Verstärker 1</text>
<line x1="532" y1="587.5" x2="546" y2="587.5" stroke="#50c050" stroke-width="1.2"/>
<text x="551" y="591">KE 25 SC - 8 Ohm</text>
<text x="644.5" y="591">(2)</text>
<line x1="532" y1="599.5" x2="546" y2="599.5" stroke="#d070e0" stroke-width="1.4"/>
<text x="551" y="603">Impedanz Verstärker 2</text>
</svg>
<div id="status" class="a"></div>
<div class="a" style="left:6px;top:631px;white-space:nowrap;line-height:12px">Berechnung war erfolgreich.</div>
</body></html>
